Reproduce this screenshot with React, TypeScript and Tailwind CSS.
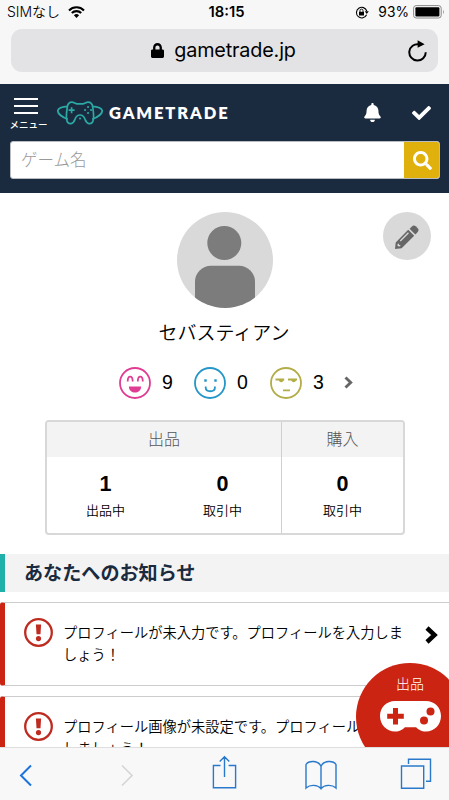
import type { ReactNode } from 'react';
import { FaBell, FaCheck, FaChevronRight, FaLock, FaSearch } from 'react-icons/fa';

const StatusBar = () => {
  return (
    <div className="grid h-6 grid-cols-3 items-center pl-[7px] pr-[3px] text-[14px] text-black">
      <div className="flex items-center gap-2">
        <span className="whitespace-nowrap font-['Inter','Noto_Sans_CJK_JP',sans-serif] text-[14px] font-[350] leading-6">
          SIMなし
        </span>
        <svg className="h-3 w-[17px]" viewBox="0 0 17 12" fill="none">
          <path d="M1 4.4a10.6 10.6 0 0 1 15 0" stroke="#000" strokeWidth="2.1" />
          <path d="M3.8 7.1a6.7 6.7 0 0 1 9.4 0" stroke="#000" strokeWidth="2.1" />
          <path d="M5.9 9.2a3.7 3.7 0 0 1 5.2 0L8.5 11.900Z" fill="#000" />
        </svg>
      </div>
      <span className="text-center font-['Inter',sans-serif] text-[14.8px] font-semibold">18:15</span>
      <div className="flex items-center justify-end">
        <svg className="mr-[9px] h-[13px] w-[14px] shrink-0" viewBox="0 0 14 13" fill="none">
          <path d="M11.6 8.8A5.3 5.3 0 1 1 11.8 5" stroke="#000" strokeWidth="1.1" />
          <path d="M9.8 5.2h4L11.8 8Z" fill="#000" />
          <path d="M4 5.8h5v3.700H4Z" fill="#000" />
          <path d="M5 6V4.600a1.500 1.500 0 0 1 3 0V6" stroke="#000" strokeWidth="0.9" />
        </svg>
        <span className="mr-1 font-['Inter',sans-serif] text-[13.8px]">93%</span>
        <svg className="h-[14px] w-[33px] shrink-0" viewBox="0 0 33 14" fill="none">
          <rect x="0.6" y="0.6" width="27.6" height="12.4" rx="2.6" stroke="#888" />
          <rect x="2.4" y="2.2" width="24" height="9.2" rx="1" fill="#000" />
          <path d="M30 4.600q1.600 2.200 0 4.600Z" fill="#888" />
        </svg>
      </div>
    </div>
  );
};

const AddressBar = () => {
  return (
    <div className="flex h-[60px] items-start px-[11px] pt-[5px]">
      <div className="grid h-[43px] w-full grid-cols-[40px_1fr_40px] items-center rounded-[11px] bg-[#e3e3e5]">
        <span />
        <div className="flex items-center justify-center pr-[2px]">
          <FaLock className="mr-[10px] h-[17px] w-[13px]" />
          <span className="font-['Inter',sans-serif] text-[19.8px] leading-[43px] tracking-[-0.15px]">gametrade.jp</span>
        </div>
        <svg className="mr-[10px] h-[22px] w-5 justify-self-end" viewBox="0 0 20 22" fill="none">
          <path d="M17.7 12.2A8.2 8.2 0 1 1 11 4.3" stroke="#000" strokeWidth="2" />
          <path d="M9.6 0.2 16.6 4.2 9.6 7.8Z" fill="#000" />
        </svg>
      </div>
    </div>
  );
};

const Logo = () => {
  return (
    <div className="flex items-center">
      <svg className="h-6 w-[46px]" viewBox="0 0 46 24" fill="none" stroke="#2ba9a4" strokeWidth="1.7">
        <path d="M10.8 18.3C5 16 0.8 12.4 0.8 10 0.8 7.3 5 5.7 11 5.3M35.2 18.3C41 16 45.2 12.4 45.2 10 45.2 7.3 41 5.7 35 5.3" />
        <path d="M15 1.200c2 0 3.300 1.600 5.200 1.600h5.600c1.900 0 3.200-1.600 5.200-1.600 3 0 4.300 1.900 4.700 4.800.6 3.800 1.200 9 .7 12.200-.4 3-1.600 4.800-4.500 4.400-2.400-.4-3-2-3.900-4.300-.8-2.400-2.600-4.300-5-4.300s-4.200 1.900-5 4.300c-.9 2.300-1.500 3.900-3.900 4.300-2.900.4-4.100-1.400-4.500-4.400-.5-3.200.1-8.400.7-12.200.4-2.900 1.700-4.800 4.700-4.800Z" />
        <path d="M14.600 6.200v6M11.600 9.200h6" />
        <path d="M31 6h.1M31 12h.1M28 9h.1M34 9h.1M23 17.500h.1" strokeWidth="2" strokeLinecap="round" />
      </svg>
      <span className="ml-[6px] font-['Lato',sans-serif] text-[16.5px] font-extrabold leading-6 tracking-[1.9px] text-white">
        GAMETRADE
      </span>
    </div>
  );
};

const SiteHeader = () => {
  return (
    <header className="h-[109px] shrink-0 bg-[#1a2b3f] pl-[10px] pr-[9px] text-white">
      <div className="flex h-[57px] items-center">
        <button className="flex w-[37px] flex-col items-center pt-[3px]" type="button">
          <span className="mr-[5px] flex w-6 flex-col gap-[5px]">
            <span className="h-[2px] bg-white" />
            <span className="h-[2px] bg-white" />
            <span className="h-[2px] bg-white" />
          </span>
          <span className="mt-[3px] whitespace-nowrap text-[9.5px] font-medium leading-[14px]">メニュー</span>
        </button>
        <div className="ml-[10px]">
          <Logo />
        </div>
        <div className="ml-auto flex items-center gap-[31px] pr-[9px]">
          <FaBell className="h-[19px] w-[17px]" />
          <FaCheck className="h-5 w-[19px]" />
        </div>
      </div>
      <div className="flex h-[38px] overflow-hidden rounded-[3px] border border-[#b9bdc2] bg-white">
        <span className="flex-1 pl-[10px] text-[16.5px] font-light leading-[35px] text-[#999]">ゲーム名</span>
        <button className="-my-px -mr-px flex w-9 items-center justify-center bg-[#e0b10c]" type="button">
          <FaSearch className="h-[19px] w-[19px]" />
        </button>
      </div>
    </header>
  );
};

const Face = ({ color, children }: { color: string; children: ReactNode }) => {
  return (
    <svg className="h-8 w-8 shrink-0" viewBox="0 0 32 32" fill="none" stroke={color} strokeWidth="1.8">
      <circle cx="16" cy="16" r="15" />
      {children}
    </svg>
  );
};

const Ratings = () => {
  return (
    <div className="mt-[21px] flex h-8 items-center pl-[119px] font-['Liberation_Sans',sans-serif] text-[19.5px] text-black">
      <Face color="#df3d94">
        <path d="M8.700 14.500c0-6.500 5-6.500 5 0M18.800 14.500c0-6.500 5-6.500 5 0" />
        <path d="M9.900 19.400h12.200c0 8-12.200 8-12.200 0Z" fill="#df3d94" stroke="none" />
      </Face>
      <span className="ml-[11px] w-8">9</span>
      <Face color="#2496c8">
        <path d="M11.500 12.200v2.600M21.500 12.200v2.600" strokeWidth="2.400" />
        <path d="M11.700 19.600v1.200c0 4.600 9.200 4.600 9.200 0v-1.200" />
      </Face>
      <span className="ml-[11px] w-[33px]">0</span>
      <Face color="#b2ad47">
        <path d="M5.500 12.500h8.700M18 12.500h9M13 23.300h7" />
        <path d="M8.700 12.500h5c0 3.700-5 3.700-5 0ZM21.200 12.500h5c0 3.700-5 3.700-5 0Z" fill="#b2ad47" stroke="none" />
      </Face>
      <span className="ml-[11px] w-[31px]">3</span>
      <svg className="-mt-px h-[13px] w-[9px] text-[#666]" viewBox="0 0 9 13" fill="none">
        <path d="M1.500 1.500 6.700 6.500 1.500 11.500" stroke="currentColor" strokeWidth="2.900" />
      </svg>
    </div>
  );
};

const Profile = () => {
  return (
    <section className="relative">
      <div className="flex flex-col items-center pt-[19px]">
        <svg className="h-24 w-24" viewBox="0 0 96 96">
          <clipPath id="avatar">
            <circle cx="48" cy="48" r="48" />
          </clipPath>
          <g clipPath="url(#avatar)">
            <path d="M0 0h96v96H0Z" fill="#d9d9d9" />
            <circle cx="47.3" cy="31" r="17" fill="#7c7c7c" />
            <rect x="18" y="53.7" width="60" height="62" rx="16" fill="#7c7c7c" />
          </g>
        </svg>
        <p className="mt-[9px] pr-px text-[19px] font-[350] leading-[29px] text-black">セバスティアン</p>
      </div>
      <button
        className="absolute right-[18px] top-[19px] flex size-12 items-center justify-center rounded-full bg-[#d9d9d9]"
        type="button"
      >
        <svg className="mt-[2px] size-6" viewBox="0 0 24 24" fill="#666">
          <path d="M16.600 1.700q2.200-2.200 4.100-.4l2 2q1.800 1.900-.4 4.100l-2 2-5.700-5.700Z" />
          <path
            fillRule="evenodd"
            d="M13.200 4.800 19.200 10.800 6.600 23.300 0 24l.7-6.600ZM13 7.300 4.800 15.500l.9.900L13.900 8.200ZM2.700 18.800l-.3 1.700 1.100 1.100 1.700-.3.200-1.200-1.300-.1-.1-1.300Z"
          />
        </svg>
      </button>
      <Ratings />
    </section>
  );
};

const Stat = ({ value, label }: { value: number; label: string }) => {
  return (
    <div className="flex flex-1 flex-col items-center pt-[15px] text-black">
      <span className="font-['Liberation_Sans',sans-serif] text-[21.5px] font-bold leading-6">{value}</span>
      <span className="mt-1 text-[13px] font-[350] leading-5">{label}</span>
    </div>
  );
};

const StatsTable = () => {
  return (
    <section className="mx-[45px] mt-[21px] flex h-[115px] w-[360px] overflow-hidden rounded-[4px] border-2 border-[#d8d8d8]">
      <div className="w-[235px] border-r border-[#d0d0d0]">
        <h2 className="h-[35px] bg-[#f3f3f3] text-center text-[16px] font-light leading-[33px] text-[#555]">出品</h2>
        <div className="flex">
          <Stat value={1} label="出品中" />
          <Stat value={0} label="取引中" />
        </div>
      </div>
      <div className="flex-1">
        <h2 className="h-[35px] bg-[#f3f3f3] text-center text-[16px] font-light leading-[33px] text-[#555]">購入</h2>
        <div className="flex">
          <Stat value={0} label="取引中" />
        </div>
      </div>
    </section>
  );
};

const notices = [
  'プロフィールが未入力です。プロフィールを入力しましょう！',
  'プロフィール画像が未設定です。プロフィールを設定しましょう！',
];

const Notice = ({ text }: { text: string }) => {
  return (
    <li className="flex h-[84px] items-start overflow-hidden rounded-l-[3px] border-y border-l-[5px] border-y-[#ccc] border-l-[#cb2412] pl-[19px] pt-[15px]">
      <svg className="size-[29px] shrink-0" viewBox="0 0 29 29" fill="none">
        <circle cx="14.5" cy="14.5" r="13.3" stroke="#be2b20" strokeWidth="2.3" />
        <path d="M11.900 6.500h5.200l-.6 9.700h-4Z" fill="#be2b20" />
        <circle cx="14.5" cy="20.6" r="2.6" fill="#be2b20" />
      </svg>
      <p className="ml-[10px] mt-[3px] w-[345px] shrink-0 break-all text-[14.25px] font-[350] leading-[22px] text-black">
        {text}
      </p>
      <svg className="ml-[17px] mt-2 h-[18px] w-[13px] shrink-0" viewBox="0 0 13 18" fill="none">
        <path d="M2 2 9.5 9 2 16" stroke="#000" strokeWidth="4.5" />
      </svg>
    </li>
  );
};

const Notices = () => {
  return (
    <section className="mt-[19px]">
      <h2 className="h-[38px] border-l-[5px] border-[#20b0aa] bg-[#f3f3f3] pl-[19px] text-[19.1px] font-bold leading-[37px] text-[#1a2b3f]">
        あなたへのお知らせ
      </h2>
      <ul className="mt-[10px] flex flex-col gap-[10px]">
        {notices.map(text => (
          <Notice key={text} text={text} />
        ))}
      </ul>
    </section>
  );
};

const SellButton = () => {
  return (
    <button
      className="absolute -bottom-6 right-[-15px] flex size-[108px] flex-col items-center rounded-full bg-[#cb2412] pt-[10px] text-white"
      type="button"
    >
      <span className="text-[14px] font-light leading-[21px]">出品</span>
      <svg className="mt-[7px] h-[31px] w-[61px]" viewBox="0 0 61 31">
        <path
          d="M15 0h31c8.500 0 15 6.500 15 15s-6.500 15.500-15 15.500c-5 0-7.500-2-10-4.300H25c-2.500 2.300-5 4.300-10 4.300C6.500 30.500 0 23.500 0 15S6.500 0 15 0Z"
          fill="#fff"
        />
        <path d="M15.500 7v16.500M7.200 15.200h16.600" stroke="#cb2412" strokeWidth="5" />
        <circle cx="50.500" cy="10.500" r="4" fill="#cb2412" />
        <circle cx="44" cy="19.500" r="4" fill="#cb2412" />
      </svg>
    </button>
  );
};

const Toolbar = () => {
  return (
    <nav className="flex h-[53px] shrink-0 items-start border-t border-[#dedede] bg-[#f8f8f8] pl-[19px] text-[#2879cc]">
      <svg className="mt-4 h-[23px] w-[14px]" viewBox="0 0 14 23" fill="none">
        <path d="M12 1.500 2 11.500 12 21.500" stroke="#1b73db" strokeWidth="2" />
      </svg>
      <svg className="ml-[87px] mt-4 h-[23px] w-[14px]" viewBox="0 0 14 23" fill="none">
        <path d="M2 1.500 12 11.500 2 21.500" stroke="#d6d6d8" strokeWidth="1.700" />
      </svg>
      <svg className="ml-[77px] mt-[7px] h-[34px] w-[26px]" viewBox="0 0 26 34" fill="none" stroke="currentColor" strokeWidth="1.400">
        <path d="M9.500 10.500H2.400v22.200h22.200V10.500h-7M13.500 22V2M8.700 6.500 13.500 1.700l4.800 4.800" />
      </svg>
      <svg className="ml-[67px] mt-3 h-[31px] w-[34px]" viewBox="0 0 34 31" fill="none" stroke="currentColor" strokeWidth="1.400">
        <path d="M17 6.200C14 0 4.500.5 2 4.500v23.600c4-3.700 11.500-3.600 15 .5 3.500-4.100 11-4.200 15-.5V4.500C29.500.5 20 0 17 6.200ZM17 6v23.500" />
      </svg>
      <svg className="ml-[62px] mt-[10px] h-8 w-8" viewBox="0 0 32 32" fill="none" stroke="currentColor" strokeWidth="1.400">
        <path d="M1.500 8h22.200v22.200H1.500ZM8.500 6V1.200h22v22H26" />
      </svg>
    </nav>
  );
};

const App = () => {
  return (
    <div className="flex h-[800px] w-[449px] flex-col overflow-hidden bg-white font-['Noto_Sans_CJK_JP',sans-serif]">
      <div className="h-[84px] shrink-0 bg-[#f7f7f8]">
        <StatusBar />
        <AddressBar />
      </div>
      <SiteHeader />
      <main className="relative min-h-0 flex-1 overflow-hidden">
        <Profile />
        <StatsTable />
        <Notices />
        <SellButton />
      </main>
      <Toolbar />
    </div>
  );
};

export default App;
